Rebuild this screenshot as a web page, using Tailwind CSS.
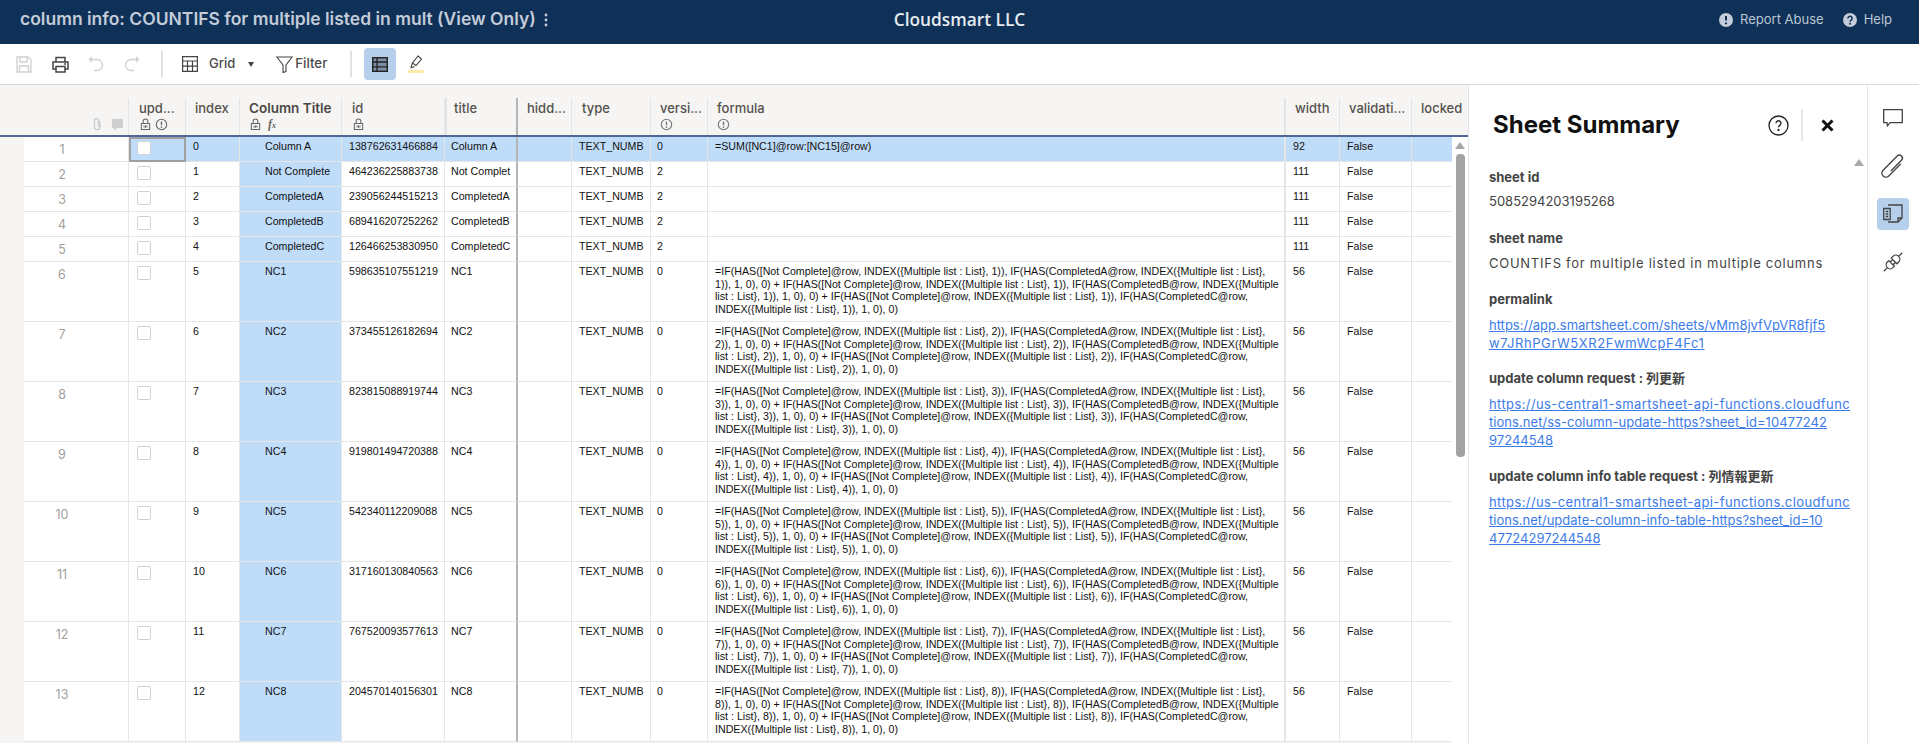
<!DOCTYPE html>
<html lang="en">
<head>
  <meta charset="UTF-8" />
  <title>column info: COUNTIFS for multiple listed in mult</title>
  <script src="https://cdn.jsdelivr.net/npm/@tailwindcss/browser@4"></script>
</head>
<body class="h-[743px] overflow-hidden bg-white font-['Inter',sans-serif] flex flex-col">
  <svg class="hidden">
    <symbol id="lock" viewBox="0 0 14 14"><path d="M2.5 6h9v6.5h-9zM4.5 6V3.6a2.5 2.5 0 0 1 5 0V6M7 8v2.5M5.5 8.2v2M8.5 8.2v2" fill="none" stroke="currentColor" stroke-width="1.1"/></symbol>
    <symbol id="info" viewBox="0 0 14 14"><circle cx="7" cy="7" r="5.6" fill="none" stroke="currentColor" stroke-width="1.2"/><path d="M7 3.8v4" stroke="currentColor" stroke-width="1.5"/><circle cx="7" cy="9.8" r=".9" fill="currentColor"/></symbol>
  </svg>

  <!-- top bar -->
  <header class="h-[44px] shrink-0 bg-[#0f3158] grid grid-cols-[1fr_auto_1fr] items-center pb-[5px] px-[20px]">
    <div class="flex items-center gap-[8px] text-[17.500px] font-semibold text-[#c3ccd8] whitespace-nowrap">
      <span>column info: COUNTIFS for multiple listed in mult (View Only)</span>
      <svg class="w-[4px] h-[14px]" viewBox="0 0 4 14" fill="#c3ccd8"><circle cx="2" cy="2" r="1.4"/><circle cx="2" cy="7" r="1.4"/><circle cx="2" cy="12" r="1.4"/></svg>
    </div>
    <div class="font-['Open_Sans',sans-serif] font-semibold text-[17.300px] text-[#e6ebf1] whitespace-nowrap">Cloudsmart LLC</div>
    <div class="flex justify-end items-center pr-[7px] text-[13px] text-[#bcc7d5]">
      <svg class="w-[14px] h-[14px] mr-[7px]" viewBox="0 0 14 14"><circle cx="7" cy="7" r="7" fill="#c3ccd8"/><path d="M7 3v4.6" stroke="#0f3158" stroke-width="2"/><circle cx="7" cy="10.3" r="1.1" fill="#0f3158"/></svg>
      <span>Report Abuse</span>
      <svg class="w-[14px] h-[14px] ml-[19px] mr-[7px]" viewBox="0 0 14 14"><circle cx="7" cy="7" r="7" fill="#c3ccd8"/><path d="M4.9 5.4a2.1 2.1 0 1 1 3.3 1.7c-.8.5-1.2.9-1.2 1.7" fill="none" stroke="#0f3158" stroke-width="1.5"/><circle cx="7" cy="10.8" r="1" fill="#0f3158"/></svg>
      <span>Help</span>
    </div>
  </header>

  <!-- toolbar -->
  <div class="h-[41px] shrink-0 border-b border-[#d9d9d9] flex items-center pl-[16px] text-[#4b4b4b]">
    <svg class="w-[16px] h-[17px]" viewBox="0 0 16 17" fill="none" stroke="#cfcfcf" stroke-width="1.3"><path d="M1 1h11l3 3v12H1zM4 1v5h7V1M3.500 16v-6h9v6"/></svg>
    <svg class="w-[17px] h-[17px] ml-[20px]" viewBox="0 0 17 17" fill="none" stroke="#444" stroke-width="1.5"><path d="M4 6V1.500h9V6M4 13H1V6h15v7h-3M4 10.500h9V16H4z"/><path d="M12 8h2" /></svg>
    <svg class="w-[16px] h-[16px] ml-[19px]" viewBox="0 0 16 16" fill="none" stroke="#cfcfcf" stroke-width="1.3"><path d="M4 1 1.500 3.500 4 6M1.500 3.500H9a5.500 5.500 0 0 1 0 11H6"/></svg>
    <svg class="w-[16px] h-[16px] ml-[20px]" viewBox="0 0 16 16" fill="none" stroke="#cfcfcf" stroke-width="1.3"><path d="m12 1 2.500 2.500L12 6M14.500 3.500H7a5.500 5.500 0 0 0 0 11h3"/></svg>
    <div class="w-[2px] h-[26px] bg-[#e2e2e2] ml-[21px]"></div>
    <svg class="w-[16px] h-[16px] ml-[19px]" viewBox="0 0 16 16" fill="none" stroke="#444" stroke-width="1.2"><path d="M.6.6h14.800v14.800H.6zM.6 5h14.800M.6 10.200h14.800M5.500 5v10.400M10.500 5v10.400"/></svg>
    <span class="ml-[11px] text-[13px] font-medium text-[#4b4b4b]">Grid</span>
    <span class="ml-[13px] w-0 h-0 border-x-[3.500px] border-x-transparent border-t-[5px] border-t-[#444]"></span>
    <svg class="w-[17px] h-[17px] ml-[22px]" viewBox="0 0 17 17" fill="none" stroke="#444" stroke-width="1.1"><path d="M.8 1h15.400L10 9v6.500L7 16.500V9z"/></svg>
    <span class="ml-[2px] text-[13.300px] font-medium text-[#4b4b4b]">Filter</span>
    <div class="w-[2px] h-[26px] bg-[#e2e2e2] ml-[23px]"></div>
    <div class="w-[32px] h-[32px] ml-[12px] rounded-[4px] bg-[#b6cfea] flex items-center justify-center">
      <svg class="w-[16px] h-[15px]" viewBox="0 0 16 15"><rect x=".7" y=".7" width="14.600" height="13.600" fill="#7b8ea6" stroke="#222" stroke-width="1.4"/><path d="M.7 5h14.600M.7 9.800h14.600M5 .7v13.600" stroke="#222" stroke-width="1.300" fill="none"/></svg>
    </div>
    <div class="ml-[12px] flex flex-col items-center gap-[1px]">
      <svg class="w-[14px] h-[14px]" viewBox="0 0 14 14" fill="none" stroke="#444" stroke-width="1.1"><path d="M9 1l3.500 3-5.500 6.500L3.500 8zM3.500 8 2 12.500l3.800-.7"/></svg>
      <span class="w-[16px] h-[3px] bg-[#fbeba8]"></span>
    </div>
  </div>

  <div class="flex-1 min-h-0 flex">
    <!-- sheet grid -->
    <div class="w-[1468px] shrink-0 bg-[#f6f5f3] flex flex-col">
      <div class="h-[52px] shrink-0 border-b-[2px] border-[#4e6698] pt-[13px] grid grid-cols-[24px_105px_57px_54px_102px_103px_73px_54px_79px_57px_578px_54px_72px_56px] text-[13px] text-[#55524e] font-medium">
        <div></div>
        <div class="border-r border-[#e4e4e4] flex justify-end items-end gap-[8px] pr-[4px] pb-[3px]">
          <svg class="w-[11px] h-[15px]" viewBox="0 0 11 15" fill="none" stroke="#cfcfcf" stroke-width="1.4"><path d="M8 4v7a3 3 0 0 1-5.500 0V3.500a2 2 0 0 1 4 0V10"/></svg>
          <svg class="w-[13px] h-[14px]" viewBox="0 0 13 14" fill="#cfcfcf"><path d="M1 1h11v9H6l-3 3v-3H1z"/></svg>
        </div>
        <div class="border-r border-[#e4e4e4] pl-[10px]"><div class="leading-[20px]">upd...</div><div class="flex gap-[3px] text-[#666]"><svg class="w-[13px] h-[13px]"><use href="#lock"/></svg><svg class="w-[13px] h-[13px]"><use href="#info"/></svg></div></div>
        <div class="border-r border-[#e4e4e4] pl-[9px] leading-[20px]">index</div>
        <div class="border-r border-[#e4e4e4] pl-[9px]"><div class="leading-[20px] text-[13.500px] font-semibold text-[#4a4744]">Column Title</div><div class="flex items-center gap-[6px] text-[#666]"><svg class="w-[13px] h-[13px]"><use href="#lock"/></svg><span class="flex items-end font-['Liberation_Serif',serif] italic font-bold text-[12px] leading-[13px]">f<span class="text-[8px] leading-[10px]">x</span></span></div></div>
        <div class="border-r border-[#e4e4e4] pl-[10px]"><div class="leading-[20px]">id</div><div class="text-[#666]"><svg class="w-[13px] h-[13px]"><use href="#lock"/></svg></div></div>
        <div class="border-l-2 border-r-[2px] border-l-[#e4e4e4] border-r-[#b5b5b5] pl-[7px] leading-[20px]">title</div>
        <div class="border-r border-[#e4e4e4] pl-[9px] leading-[20px]">hidd...</div>
        <div class="border-r border-[#e4e4e4] pl-[10px] leading-[20px]">type</div>
        <div class="border-r border-[#e4e4e4] pl-[9px]"><div class="leading-[20px]">versi...</div><div class="text-[#777]"><svg class="w-[13px] h-[13px]"><use href="#info"/></svg></div></div>
        <div class="border-r-2 border-[#e4e4e4] pl-[9px]"><div class="leading-[20px]">formula</div><div class="text-[#777]"><svg class="w-[13px] h-[13px]"><use href="#info"/></svg></div></div>
        <div class="border-r border-[#e4e4e4] pl-[9px] leading-[20px]">width</div>
        <div class="border-r border-[#e4e4e4] pl-[9px] leading-[20px] whitespace-nowrap">validati...</div>
        <div class="pl-[9px] leading-[20px]">locked</div>
      </div>
      <div class="flex-1 min-h-0 flex overflow-hidden">
        <div id="rows" class="w-[1452px] shrink-0 font-['Liberation_Sans',Arial,sans-serif] text-[10.670px] text-[#111]"></div>
        <div class="w-[16px] shrink-0 bg-white flex flex-col items-center">
          <span class="mt-[5px] w-0 h-0 border-x-[5px] border-x-transparent border-b-[7px] border-b-[#a8a8a8]"></span>
          <span class="mt-[5px] w-[9px] h-[303px] rounded-[4px] bg-[#a3a3a3]"></span>
        </div>
      </div>
    </div>

    <!-- sheet summary panel -->
    <aside class="flex-1 min-w-0 border-l border-[#e4e4e4] relative pl-[20px]">
      <div class="h-[51px] flex items-center pt-[29px]">
        <h2 class="ml-[4px] text-[24px] font-bold text-[#111] leading-none whitespace-nowrap">Sheet Summary</h2>
        <svg class="w-[21px] h-[21px] ml-[88px]" viewBox="0 0 21 21" fill="none" stroke="#222" stroke-width="1.300"><circle cx="10.500" cy="10.500" r="9.500"/><path d="M8 8.300a2.500 2.500 0 1 1 3.800 2.100c-.9.600-1.300 1-1.300 1.900"/><circle cx="10.500" cy="15" r=".5" fill="#222"/></svg>
        <div class="w-[2px] h-[32px] bg-[#e8e8e8] ml-[12px]"></div>
        <svg class="w-[13px] h-[13px] ml-[18px]" viewBox="0 0 13 13" stroke="#111" stroke-width="3"><path d="M1.500 1.500l10 10M11.500 1.500l-10 10"/></svg>
      </div>
      <span class="absolute right-[3px] top-[74px] w-0 h-0 border-x-[5px] border-x-transparent border-b-[7px] border-b-[#a8a8a8]"></span>
      <div class="pt-[32px] text-[13px] leading-[18px] text-[#444] whitespace-nowrap">
        <h3 class="font-bold">sheet id</h3>
        <p class="mt-[6px]">5085294203195268</p>
        <h3 class="font-bold mt-[19px]">sheet name</h3>
        <p class="mt-[7px] tracking-[0.74px]">COUNTIFS for multiple listed in multiple columns</p>
        <h3 class="font-bold mt-[18px]">permalink</h3>
        <a class="block mt-[8px] text-[#3c7be8] underline" href="#">
          <span class="block">https://app.smartsheet.com/sheets/vMm8jvfVpVR8fjf5</span>
          <span class="block tracking-[0.6px]">w7JRhPGrW5XR2FwmWcpF4Fc1</span>
        </a>
        <h3 class="font-bold mt-[17px] font-['Inter','Noto_Sans_CJK_JP',sans-serif]">update column request : 列更新</h3>
        <a class="block mt-[8px] text-[#3c7be8] underline" href="#">
          <span class="block tracking-[0.4px]">https://us-central1-smartsheet-api-functions.cloudfunc</span>
          <span class="block tracking-[0.05px]">tions.net/ss-column-update-https?sheet_id=10477242</span>
          <span class="block">97244548</span>
        </a>
        <h3 class="font-bold mt-[18px] font-['Inter','Noto_Sans_CJK_JP',sans-serif]">update column info table request : 列情報更新</h3>
        <a class="block mt-[8px] text-[#3c7be8] underline" href="#">
          <span class="block tracking-[0.4px]">https://us-central1-smartsheet-api-functions.cloudfunc</span>
          <span class="block">tions.net/update-column-info-table-https?sheet_id=10</span>
          <span class="block">47724297244548</span>
        </a>
      </div>
    </aside>

    <!-- right rail -->
    <nav class="w-[52px] shrink-0 border-l border-[#e4e4e4] flex flex-col items-center pt-[17px] pr-[1px] text-[#444]">
      <div class="w-[32px] h-[32px] flex items-center justify-center"><svg class="w-[20px] h-[18px]" viewBox="0 0 20 18" fill="none" stroke="#444" stroke-width="1.300"><path d="M.7.7h18.600v13H7L4.500 16.800 4 13.700H.7z"/></svg></div>
      <div class="w-[32px] h-[32px] mt-[16px] flex items-center justify-center"><svg class="w-[22px] h-[22px] overflow-visible" viewBox="0 0 22 22" fill="none" stroke="#444" stroke-width="1.400"><path transform="rotate(45 11 11)" d="M15 4v17a4 4 0 0 1-8 0V1a3 3 0 0 1 6 0v15"/></svg></div>
      <div class="w-[32px] h-[32px] mt-[16px] rounded-[4px] bg-[#b6cfea] flex items-center justify-center"><svg class="w-[20px] h-[20px]" viewBox="0 0 20 20" fill="none" stroke="#444" stroke-width="1.300"><path d="M5 1h14v13l-4 4H5M15 18v-4h4"/><path d="M.7 4.500h6.500v11H.7zM2.700 7.500h2.500M2.700 10h2.500M2.700 12.500h2.500"/></svg></div>
      <div class="w-[32px] h-[32px] mt-[16px] flex items-center justify-center"><svg class="w-[22px] h-[22px] overflow-visible" viewBox="0 0 22 22" fill="none" stroke="#444" stroke-width="1.300"><g transform="rotate(45 11 11)"><path d="M7 13h8v2a4 4 0 0 1-8 0zM11 19v5M9 10v3M13 10v3M7 9.500h8V7a4 4 0 0 0-8 0zM11 3v-5"/></g></svg></div>
    </nav>
  </div>

  <script>
    const tail = n => "=IF(HAS([Not Complete]@row, INDEX({Multiple list : List}, " + n + ")), IF(HAS(CompletedA@row, INDEX({Multiple list : List},<br>" + n + ")), 1, 0), 0) + IF(HAS([Not Complete]@row, INDEX({Multiple list : List}, " + n + ")), IF(HAS(CompletedB@row, INDEX({Multiple<br>list : List}, " + n + ")), 1, 0), 0) + IF(HAS([Not Complete]@row, INDEX({Multiple list : List}, " + n + ")), IF(HAS(CompletedC@row,<br>INDEX({Multiple list : List}, " + n + ")), 1, 0), 0)";
    const data = [
      ["Column A", "138762631466884", "Column A", 0, "=SUM([NC1]@row:[NC15]@row)", 92],
      ["Not Complete", "464236225883738", "Not Complet", 2, "", 111],
      ["CompletedA", "239056244515213", "CompletedA", 2, "", 111],
      ["CompletedB", "689416207252262", "CompletedB", 2, "", 111],
      ["CompletedC", "126466253830950", "CompletedC", 2, "", 111],
      ["NC1", "598635107551219", "NC1", 0, tail(1), 56],
      ["NC2", "373455126182694", "NC2", 0, tail(2), 56],
      ["NC3", "823815088919744", "NC3", 0, tail(3), 56],
      ["NC4", "919801494720388", "NC4", 0, tail(4), 56],
      ["NC5", "542340112209088", "NC5", 0, tail(5), 56],
      ["NC6", "317160130840563", "NC6", 0, tail(6), 56],
      ["NC7", "767520093577613", "NC7", 0, tail(7), 56],
      ["NC8", "204570140156301", "NC8", 0, tail(8), 56]
    ];

    const cell = "border-r border-b border-[#e6e6e6] px-[7px] pt-[3px] leading-[13px] overflow-hidden whitespace-nowrap";
    const html = data.map((r, i) => {
      const sel = i === 0;
      const rowCls = (i < 5 ? "h-[25px] " : "h-[60px] ") + (sel ? "bg-[#bfdcf9] " : "bg-white ");
      const box = sel
        ? "border-[2px] border-[#a0a0a0] pl-[6px] pt-[2px]"
        : "border-r border-b border-[#e6e6e6] pl-[8px] pt-[4px]";
      return `<div class="${rowCls}grid grid-cols-[24px_105px_57px_54px_102px_103px_73px_54px_79px_57px_578px_54px_72px_40px]">
        <div class="bg-[#f6f5f3]"></div>
        <div class="bg-white border-r border-b border-[#e6e6e6] text-center pr-[28px] pt-[5px] font-['Inter',sans-serif] text-[12.500px] leading-[15px] text-[#a3a09c]">${i + 1}</div>
        <div class="${box}"><div class="w-[14px] h-[14px] rounded-[2px] bg-white border border-[#d2d2d2]"></div></div>
        <div class="${cell}">${i}</div>
        <div class="${cell} bg-[#bfdcf9] pl-[25px]">${r[0]}</div>
        <div class="${cell}">${r[1]}</div>
        <div class="${cell} border-r-[2px] border-r-[#b5b5b5] pl-[6px]">${r[2]}</div>
        <div class="${cell}"></div>
        <div class="${cell}">TEXT_NUMB</div>
        <div class="${cell} pl-[6px]">${r[3]}</div>
        <div class="border-r-2 border-b border-[#e6e6e6] pl-[7px] pt-[3px] leading-[12.700px] whitespace-nowrap overflow-hidden">${r[4]}</div>
        <div class="${cell}">${r[5]}</div>
        <div class="${cell}">False</div>
        <div class="${cell} border-r-0"></div>
      </div>`;
    }).join("");
    document.getElementById("rows").innerHTML = html;
  </script>
</body>
</html>
